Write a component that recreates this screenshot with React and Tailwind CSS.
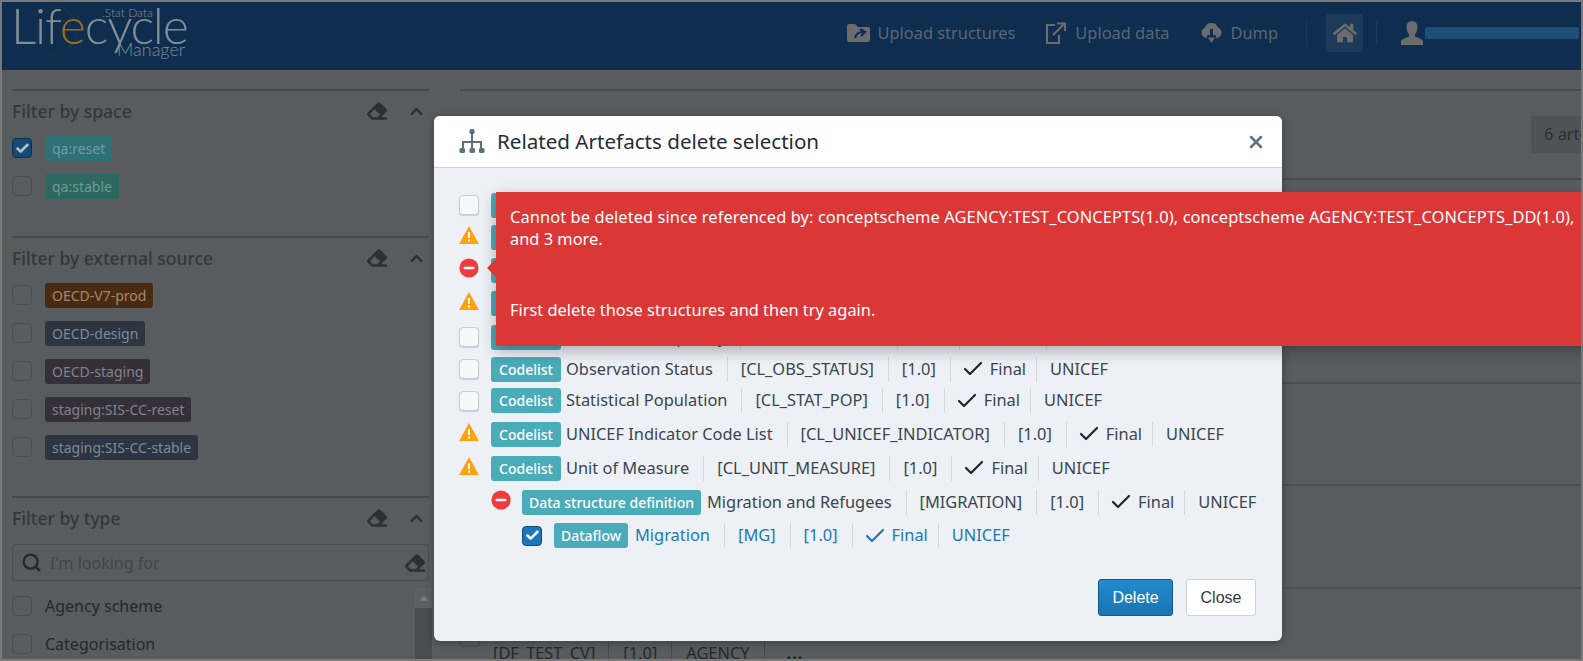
import { Check, ChevronUp, Search, X } from "lucide-react";
import { FaEraser, FaHome, FaCaretUp } from "react-icons/fa";

const FONT = "font-['Noto_Sans',sans-serif]";

const externalSources = [
  { label: "OECD-V7-prod", tone: "bg-[#4a2a10] text-[#a08a72]" },
  { label: "OECD-design", tone: "bg-[#2b3642] text-[#808a93]" },
  { label: "OECD-staging", tone: "bg-[#33303a] text-[#85828b]" },
  { label: "staging:SIS-CC-reset", tone: "bg-[#33303a] text-[#85828b]" },
  { label: "staging:SIS-CC-stable", tone: "bg-[#2b3642] text-[#808a93]" },
];

const artefacts = [
  { state: "free", height: "h-[32px]", name: "Age Group", code: "[CL_AGE]" },
  { state: "warn", height: "h-[32px]", name: "Geographic Area", code: "[CL_AREA]" },
  { state: "error", height: "h-[34px]", name: "Data Source", code: "[CL_SOURCE]" },
  { state: "warn", height: "h-[33px]", name: "Sex", code: "[CL_SEX]" },
  { state: "free", height: "h-[34px]", name: "Collection Frequency", code: "[CL_FREQ_MULT]" },
  { state: "free", height: "h-[30px]", name: "Observation Status", code: "[CL_OBS_STATUS]" },
  { state: "free", height: "h-[33px]", name: "Statistical Population", code: "[CL_STAT_POP]" },
  { state: "warn", height: "h-[34px]", name: "UNICEF Indicator Code List", code: "[CL_UNICEF_INDICATOR]" },
  { state: "warn", height: "h-[34px]", name: "Unit of Measure", code: "[CL_UNIT_MEASURE]" },
];

const DimBox = ({ checked }) => (
  <span
    className={`flex h-[20px] w-[20px] shrink-0 items-center justify-center rounded-[4px] border ${
      checked ? "border-[#0f2f4c] bg-[#174a75]" : "border-[#4a4e51] bg-[#585c5f]"
    }`}
  >
    {checked && <Check size={15} strokeWidth={4} className="text-[#b9c3cb]" />}
  </span>
);

const Box = ({ checked }) => (
  <span
    className={`flex h-[20px] w-[20px] shrink-0 items-center justify-center rounded-[4px] border ${
      checked
        ? "border-[#14496f] bg-[#1b76bb]"
        : "border-[#c6ccd1] bg-[#f6f8fa] shadow-[0_1px_1px_rgba(0,0,0,0.15)]"
    }`}
  >
    {checked && <Check size={15} strokeWidth={4} className="text-white" />}
  </span>
);

const WarnIcon = () => (
  <svg width="20" height="18" viewBox="0 0 20 18" className="mb-[5px] shrink-0">
    <path d="M10 0 L20 18 L0 18 Z" fill="#ffa30d" />
    <rect x="9" y="6" width="2" height="6" fill="#fff" />
    <rect x="9" y="13.5" width="2" height="2" fill="#fff" />
  </svg>
);

const ErrorIcon = () => (
  <svg width="20" height="20" viewBox="0 0 20 20" className="mb-[5px] shrink-0">
    <circle cx="10" cy="10" r="9.6" fill="#ee3b3b" />
    <rect x="4.5" y="8.7" width="11" height="2.6" rx="1.2" fill="#fff" />
  </svg>
);

const Badge = ({ children }) => (
  <span className="flex h-[25px] min-w-[70px] shrink-0 items-center justify-center rounded-[3px] bg-[#4aabb9] px-[7px] text-[14px] font-medium text-white">
    {children}
  </span>
);

const Meta = ({ name, code, tone = "text-[#3a4550]", checkTone = "text-[#1c2730]" }) => (
  <div className={`flex items-center text-[16.4px] ${tone}`}>
    <span className="whitespace-nowrap pr-[14px]">{name}</span>
    <span className="flex h-[25px] items-center whitespace-nowrap border-l border-[#d3d8dc] pl-[13px] pr-[14px]">{code}</span>
    <span className="flex h-[25px] items-center whitespace-nowrap border-l border-[#d3d8dc] pl-[13px] pr-[14px]">[1.0]</span>
    <span className="flex h-[25px] items-center gap-[5px] whitespace-nowrap border-l border-[#d3d8dc] pl-[10px] pr-[10px]">
      <Check size={24} strokeWidth={2.2} className={checkTone} />
      Final
    </span>
    <span className="flex h-[25px] items-center whitespace-nowrap border-l border-[#d3d8dc] pl-[13px]">UNICEF</span>
  </div>
);

const FilterHead = ({ title }) => (
  <div className="flex h-[26px] items-center justify-between pr-[3px]">
    <span className="text-[17.5px] font-medium text-[#32373b]">{title}</span>
    <div className="flex items-center gap-[20px] text-[#2b3034]">
      <FaEraser size={20} />
      <ChevronUp size={19} strokeWidth={3} />
    </div>
  </div>
);

const FilterRow = ({ children, checked }) => (
  <div className="flex h-[38px] items-center gap-[13px]">
    <DimBox checked={checked} />
    {children}
  </div>
);

const SpaceTag = ({ label, tone }) => (
  <span className={`flex h-[25px] items-center rounded-[3px] px-[7px] text-[14px] ${tone}`}>{label}</span>
);

const Logo = () => (
  <div className="relative h-[60px] w-[180px] font-['Lato',sans-serif] font-light text-[#838d95]">
    <svg width="56" height="56" viewBox="0 0 56 56" fill="none" className="absolute left-[24px] top-0">
      <path d="M12 48 A24 24 0 0 0 50 34" stroke="#1b3044" strokeWidth="2" />
      <path d="M8 14 A24 24 0 0 1 49 18" stroke="#1b3044" strokeWidth="2" />
      <path d="M44 12 L50 20 L54 11" stroke="#1b3044" strokeWidth="2" />
    </svg>
    <span className="absolute left-[9px] top-0 whitespace-nowrap text-[50px] leading-[46px] tracking-[-1.2px]">
      Lif<span className="text-[#9a6a22]">e</span>cycle
    </span>
    <span className="absolute left-[100px] top-[2px] whitespace-nowrap text-[12px]">.Stat Data</span>
    <span className="absolute left-[115px] top-[34px] whitespace-nowrap text-[18px]">Manager</span>
  </div>
);

const NavItem = ({ icon, label, gap = "gap-[8px]" }) => (
  <div className={`flex items-center text-[16.4px] text-[#5b6772] ${gap}`}>
    {icon}
    <span>{label}</span>
  </div>
);

const StructuresIcon = () => (
  <svg width="23" height="18" viewBox="0 0 23 18">
    <path d="M0 2 A2 2 0 0 1 2 0 H8 L11 3 H21 A2 2 0 0 1 23 5 V16 A2 2 0 0 1 21 18 H2 A2 2 0 0 1 0 16 Z" fill="#6a6c6e" />
    <path d="M8 14 C9 10 12 8 16 8 M13 5 L18 8 L14 12" stroke="#0e2d4f" strokeWidth="2.2" fill="none" />
  </svg>
);

const ShareIcon = () => (
  <svg width="22" height="22" viewBox="0 0 22 22" fill="none" stroke="#6a6c6e" strokeWidth="2.2">
    <path d="M10 3 H2 V21 H14 V13" />
    <path d="M8 13 L19 2 M12 1.5 H20 V9" />
  </svg>
);

const CloudIcon = () => (
  <svg width="23" height="22" viewBox="0 0 23 22">
    <path d="M6 16 A5.5 5.5 0 0 1 5 5.5 A7 7 0 0 1 18 5.5 A5.5 5.5 0 0 1 17 16 Z" fill="#6a6c6e" />
    <path d="M11.5 7 V17 M7.5 13.5 L11.5 18 L15.5 13.5" stroke="#0e2d4f" strokeWidth="3" fill="none" />
    <path d="M8 15.5 L11.5 21 L15 15.5 Z" fill="#6a6c6e" />
  </svg>
);

const UserIcon = () => (
  <svg width="22" height="24" viewBox="0 0 22 24">
    <path d="M11 0 C15 0 16.5 3 16.5 6.5 C16.5 10 15 12 14 13.5 V15.5 C17 17 22 18 22 21 V24 H0 V21 C0 18 5 17 8 15.5 V13.5 C7 12 5.5 10 5.5 6.5 C5.5 3 7 0 11 0 Z" fill="#6a6c6e" />
  </svg>
);

const TreeIcon = () => (
  <svg width="26" height="25" viewBox="0 0 26 25" fill="#5c7080">
    <rect x="10.5" y="0" width="5" height="5" rx="1.5" />
    <rect x="12" y="5" width="2" height="14" />
    <rect x="3" y="12" width="20" height="2" />
    <rect x="3" y="12" width="2" height="7" />
    <rect x="21" y="12" width="2" height="7" />
    <rect x="0.5" y="19" width="5.5" height="5" rx="1.5" />
    <rect x="10.5" y="19" width="5.5" height="5" rx="1.5" />
    <rect x="20" y="19" width="5.5" height="5" rx="1.5" />
  </svg>
);

export default function App() {
  return (
    <div className={`relative flex h-[661px] w-[1583px] flex-col overflow-hidden border-2 border-[#7b7878] bg-[#585c5f] ${FONT}`}>
      <header className="flex h-[68px] shrink-0 items-start justify-between bg-[#0e2d4f]">
        <Logo />
        <div className="mr-[2px] flex h-full items-center pb-[6px]">
          <NavItem icon={<StructuresIcon />} label="Upload structures" gap="gap-[7px]" />
          <div className="ml-[30px]">
            <NavItem icon={<ShareIcon />} label="Upload data" />
          </div>
          <div className="ml-[30px]">
            <NavItem icon={<CloudIcon />} label="Dump" />
          </div>
          <div className="ml-[28px] h-[25px] w-px bg-[#1a3a5a]" />
          <div className="ml-[19px] flex h-[38px] w-[37px] items-center justify-center rounded-[3px] bg-[#1d3a59]">
            <FaHome size={24} className="text-[#6a6c6e]" />
          </div>
          <div className="ml-[13px] h-[25px] w-px bg-[#1a3a5a]" />
          <div className="ml-[24px] flex items-center">
            <UserIcon />
            <span className="ml-[2px] h-[12px] w-[154px] rounded-[2px] bg-[#1f4e7a]" />
          </div>
        </div>
      </header>

      <main className="flex flex-1 pl-[10px]">
        <aside className="w-[417px] shrink-0 pt-[19px]">
          <section className="h-[147px] border-t-2 border-[#45484b] pt-[7px]">
            <FilterHead title="Filter by space" />
            <div className="mt-[5px]">
              <FilterRow checked>
                <SpaceTag label="qa:reset" tone="bg-[#2f6f76] text-[#6f9da0]" />
              </FilterRow>
              <FilterRow>
                <SpaceTag label="qa:stable" tone="bg-[#2d685f] text-[#6f9a93]" />
              </FilterRow>
            </div>
          </section>
          <section className="h-[260px] border-t-2 border-[#45484b] pt-[7px]">
            <FilterHead title="Filter by external source" />
            <div className="mt-[5px]">
              {externalSources.map((source) => (
                <FilterRow key={source.label}>
                  <SpaceTag label={source.label} tone={source.tone} />
                </FilterRow>
              ))}
            </div>
          </section>
          <section className="border-t-2 border-[#45484b] pt-[7px]">
            <FilterHead title="Filter by type" />
            <div className="mt-[13px] flex h-[37px] items-center rounded-[3px] border border-[#4a4e51] pl-[8px] pr-[3px]">
              <Search size={21} strokeWidth={2.6} className="text-[#23282c]" />
              <span className="ml-[8px] flex-1 text-[16px] text-[#40454a]">I'm looking for</span>
              <FaEraser size={20} className="text-[#2b3034]" />
            </div>
            <div className="relative mt-[6px] text-[16px] text-[#23282c]">
              <FilterRow>Agency scheme</FilterRow>
              <FilterRow>Categorisation</FilterRow>
              <div className="absolute right-[-3px] top-[1px] flex h-[80px] w-[17px] flex-col bg-[#5d6063]">
                <div className="flex h-[20px] items-center justify-center text-[#777b7e]">
                  <FaCaretUp size={14} />
                </div>
                <div className="flex-1 bg-[#494c4f]" />
              </div>
            </div>
          </section>
        </aside>

        <div className="ml-[31px] flex flex-1 flex-col pt-[19px] text-[16.4px] text-[#23282c]">
          <div className="flex h-[91px] shrink-0 justify-end border-y-2 border-[#484b4e] pt-[25px]">
            <span className="mr-[-50px] flex h-[37px] w-[100px] items-center rounded-[3px] bg-[#4f5356] pl-[13px] text-[#2a2e31]">
              6 artefacts
            </span>
          </div>
          <div className="h-[102px] shrink-0 border-b-2 border-[#4b4e51]" />
          <div className="h-[102px] shrink-0 border-b-2 border-[#4b4e51]" />
          <div className="h-[102px] shrink-0 border-b-2 border-[#4b4e51]" />
          <div className="h-[103px] shrink-0 border-b-2 border-[#4b4e51]" />
          <div className="flex shrink-0 pt-[38px]">
            <DimBox />
            <div className="ml-[13px] mt-[14px] flex items-center whitespace-nowrap">
              <span className="pr-[13px]">[DF_TEST_CV]</span>
              <span className="border-l border-[#45484b] px-[14px]">[1.0]</span>
              <span className="border-l border-[#45484b] px-[14px]">AGENCY</span>
              <span className="border-l border-[#45484b] pl-[22px] font-bold tracking-[1px]">...</span>
            </div>
          </div>
        </div>
      </main>

      <div className="absolute left-[432px] top-[114px] flex h-[525px] w-[848px] flex-col rounded-[6px] bg-[#edf1f5] shadow-[0_2px_8px_rgba(0,0,0,0.3)]">
        <div className="flex h-[52px] shrink-0 items-center justify-between rounded-t-[6px] border-b border-[#ccd2d7] bg-white pl-[25px] pr-[16px]">
          <div className="flex items-center gap-[12px]">
            <TreeIcon />
            <span className="text-[20.6px] text-[#1f2d38]">Related Artefacts delete selection</span>
          </div>
          <X size={20} strokeWidth={3} className="text-[#5c7080]" />
        </div>

        <div className="pl-[25px] pt-[21px]">
          {artefacts.map((item, index) => (
            <div key={index} className={`flex items-center ${item.height}`}>
              <span className="flex w-[32px] shrink-0">
                {item.state === "free" && <Box />}
                {item.state === "warn" && <WarnIcon />}
                {item.state === "error" && <ErrorIcon />}
              </span>
              <Badge>Codelist</Badge>
              <div className="ml-[5px]">
                <Meta name={item.name} code={item.code} />
              </div>
            </div>
          ))}
          <div className="flex h-[34px] items-center pl-[32px]">
            <span className="flex w-[31px] shrink-0">
              <ErrorIcon />
            </span>
            <Badge>Data structure definition</Badge>
            <div className="ml-[6px]">
              <Meta name="Migration and Refugees" code="[MIGRATION]" />
            </div>
          </div>
          <div className="flex h-[33px] items-center pl-[63px]">
            <span className="flex w-[32px] shrink-0">
              <Box checked />
            </span>
            <Badge>Dataflow</Badge>
            <div className="ml-[7px]">
              <Meta name="Migration" code="[MG]" tone="text-[#2277b5]" checkTone="text-[#2277b5]" />
            </div>
          </div>
        </div>

        <div className="mt-auto flex justify-end gap-[13px] pb-[25px] pr-[26px]">
          <button className="h-[37px] w-[75px] rounded-[3px] border border-[#14598c] bg-gradient-to-b from-[#2389cc] to-[#1a75b3] font-['Liberation_Sans',sans-serif] text-[16px] text-white">
            Delete
          </button>
          <button className="h-[37px] w-[70px] rounded-[3px] border border-[#ccd2d7] bg-white font-['Liberation_Sans',sans-serif] text-[16px] text-[#2f3a42]">
            Close
          </button>
        </div>

        <div className="absolute left-[62px] top-[76px] h-[154px] w-[1100px] bg-[#dc3737] pl-[14px] pt-[14px] text-[16.4px] leading-[22px] text-white shadow-[0_5px_14px_rgba(0,0,0,0.28)]">
          <div className="absolute left-[-9px] top-[67px] h-0 w-0 border-y-[9px] border-r-[9px] border-y-transparent border-r-[#dc3737]" />
          <p className="whitespace-nowrap tracking-[0.1px]">
            Cannot be deleted since referenced by: conceptscheme AGENCY:TEST_CONCEPTS(1.0), conceptscheme AGENCY:TEST_CONCEPTS_DD(1.0),
          </p>
          <p>and 3 more.</p>
          <p className="mt-[49px]">First delete those structures and then try again.</p>
        </div>
      </div>
    </div>
  );
}
